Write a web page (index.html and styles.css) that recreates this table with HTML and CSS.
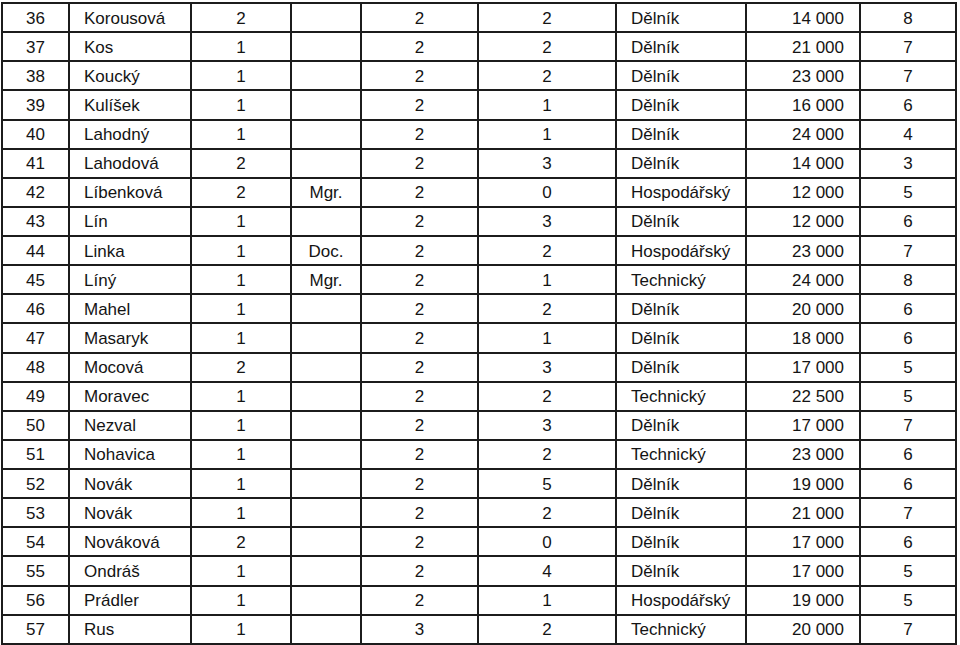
FILE: index.html
```html
<!DOCTYPE html>
<html lang="cs">
<head>
<meta charset="utf-8">
<title>Tabulka</title>
<link rel="stylesheet" href="styles.css">
</head>
<body>
<table class="data">
<colgroup>
<col class="c-id"><col class="c-name"><col class="c-a"><col class="c-title"><col class="c-b"><col class="c-c"><col class="c-type"><col class="c-pay"><col class="c-d">
</colgroup>
<tbody>
<tr><td class="ctr">36</td><td class="lft">Korousová</td><td class="ctr">2</td><td class="ctr"></td><td class="ctr">2</td><td class="ctr">2</td><td class="lft">Dělník</td><td class="rgt">14 000</td><td class="ctr">8</td></tr>
<tr><td class="ctr">37</td><td class="lft">Kos</td><td class="ctr">1</td><td class="ctr"></td><td class="ctr">2</td><td class="ctr">2</td><td class="lft">Dělník</td><td class="rgt">21 000</td><td class="ctr">7</td></tr>
<tr><td class="ctr">38</td><td class="lft">Koucký</td><td class="ctr">1</td><td class="ctr"></td><td class="ctr">2</td><td class="ctr">2</td><td class="lft">Dělník</td><td class="rgt">23 000</td><td class="ctr">7</td></tr>
<tr><td class="ctr">39</td><td class="lft">Kulíšek</td><td class="ctr">1</td><td class="ctr"></td><td class="ctr">2</td><td class="ctr">1</td><td class="lft">Dělník</td><td class="rgt">16 000</td><td class="ctr">6</td></tr>
<tr><td class="ctr">40</td><td class="lft">Lahodný</td><td class="ctr">1</td><td class="ctr"></td><td class="ctr">2</td><td class="ctr">1</td><td class="lft">Dělník</td><td class="rgt">24 000</td><td class="ctr">4</td></tr>
<tr><td class="ctr">41</td><td class="lft">Lahodová</td><td class="ctr">2</td><td class="ctr"></td><td class="ctr">2</td><td class="ctr">3</td><td class="lft">Dělník</td><td class="rgt">14 000</td><td class="ctr">3</td></tr>
<tr><td class="ctr">42</td><td class="lft">Líbenková</td><td class="ctr">2</td><td class="ctr">Mgr.</td><td class="ctr">2</td><td class="ctr">0</td><td class="lft">Hospodářský</td><td class="rgt">12 000</td><td class="ctr">5</td></tr>
<tr><td class="ctr">43</td><td class="lft">Lín</td><td class="ctr">1</td><td class="ctr"></td><td class="ctr">2</td><td class="ctr">3</td><td class="lft">Dělník</td><td class="rgt">12 000</td><td class="ctr">6</td></tr>
<tr><td class="ctr">44</td><td class="lft">Linka</td><td class="ctr">1</td><td class="ctr">Doc.</td><td class="ctr">2</td><td class="ctr">2</td><td class="lft">Hospodářský</td><td class="rgt">23 000</td><td class="ctr">7</td></tr>
<tr><td class="ctr">45</td><td class="lft">Líný</td><td class="ctr">1</td><td class="ctr">Mgr.</td><td class="ctr">2</td><td class="ctr">1</td><td class="lft">Technický</td><td class="rgt">24 000</td><td class="ctr">8</td></tr>
<tr><td class="ctr">46</td><td class="lft">Mahel</td><td class="ctr">1</td><td class="ctr"></td><td class="ctr">2</td><td class="ctr">2</td><td class="lft">Dělník</td><td class="rgt">20 000</td><td class="ctr">6</td></tr>
<tr><td class="ctr">47</td><td class="lft">Masaryk</td><td class="ctr">1</td><td class="ctr"></td><td class="ctr">2</td><td class="ctr">1</td><td class="lft">Dělník</td><td class="rgt">18 000</td><td class="ctr">6</td></tr>
<tr><td class="ctr">48</td><td class="lft">Mocová</td><td class="ctr">2</td><td class="ctr"></td><td class="ctr">2</td><td class="ctr">3</td><td class="lft">Dělník</td><td class="rgt">17 000</td><td class="ctr">5</td></tr>
<tr><td class="ctr">49</td><td class="lft">Moravec</td><td class="ctr">1</td><td class="ctr"></td><td class="ctr">2</td><td class="ctr">2</td><td class="lft">Technický</td><td class="rgt">22 500</td><td class="ctr">5</td></tr>
<tr><td class="ctr">50</td><td class="lft">Nezval</td><td class="ctr">1</td><td class="ctr"></td><td class="ctr">2</td><td class="ctr">3</td><td class="lft">Dělník</td><td class="rgt">17 000</td><td class="ctr">7</td></tr>
<tr><td class="ctr">51</td><td class="lft">Nohavica</td><td class="ctr">1</td><td class="ctr"></td><td class="ctr">2</td><td class="ctr">2</td><td class="lft">Technický</td><td class="rgt">23 000</td><td class="ctr">6</td></tr>
<tr><td class="ctr">52</td><td class="lft">Novák</td><td class="ctr">1</td><td class="ctr"></td><td class="ctr">2</td><td class="ctr">5</td><td class="lft">Dělník</td><td class="rgt">19 000</td><td class="ctr">6</td></tr>
<tr><td class="ctr">53</td><td class="lft">Novák</td><td class="ctr">1</td><td class="ctr"></td><td class="ctr">2</td><td class="ctr">2</td><td class="lft">Dělník</td><td class="rgt">21 000</td><td class="ctr">7</td></tr>
<tr><td class="ctr">54</td><td class="lft">Nováková</td><td class="ctr">2</td><td class="ctr"></td><td class="ctr">2</td><td class="ctr">0</td><td class="lft">Dělník</td><td class="rgt">17 000</td><td class="ctr">6</td></tr>
<tr><td class="ctr">55</td><td class="lft">Ondráš</td><td class="ctr">1</td><td class="ctr"></td><td class="ctr">2</td><td class="ctr">4</td><td class="lft">Dělník</td><td class="rgt">17 000</td><td class="ctr">5</td></tr>
<tr><td class="ctr">56</td><td class="lft">Prádler</td><td class="ctr">1</td><td class="ctr"></td><td class="ctr">2</td><td class="ctr">1</td><td class="lft">Hospodářský</td><td class="rgt">19 000</td><td class="ctr">5</td></tr>
<tr><td class="ctr">57</td><td class="lft">Rus</td><td class="ctr">1</td><td class="ctr"></td><td class="ctr">3</td><td class="ctr">2</td><td class="lft">Technický</td><td class="rgt">20 000</td><td class="ctr">7</td></tr>
</tbody>
</table>
</body>
</html>
```

FILE: styles.css
```css
html, body {
  margin: 0;
  padding: 0;
  background: #ffffff;
}
body {
  padding: 2px 0 0 1px;
  font-family: "Liberation Sans", Arial, sans-serif;
  font-size: 17px;
  color: #141414;
}
.data {
  border-collapse: collapse;
  table-layout: fixed;
  width: 954px;
}
.c-id { width: 67px; }
.c-name { width: 122px; }
.c-a { width: 100px; }
.c-title { width: 70px; }
.c-b { width: 117px; }
.c-c { width: 138px; }
.c-type { width: 130px; }
.c-pay { width: 114px; }
.c-d { width: 96px; }
.data tr {
  height: 29.14px;
}
.data td {
  border: 2px solid #1c1c1c;
  padding: 2px 0 0 0;
  white-space: nowrap;
  line-height: 18px;
  vertical-align: middle;
}
.ctr { text-align: center; }
.lft { text-align: left; padding-left: 14px !important; }
.rgt { text-align: right; padding-right: 15px !important; }
```
